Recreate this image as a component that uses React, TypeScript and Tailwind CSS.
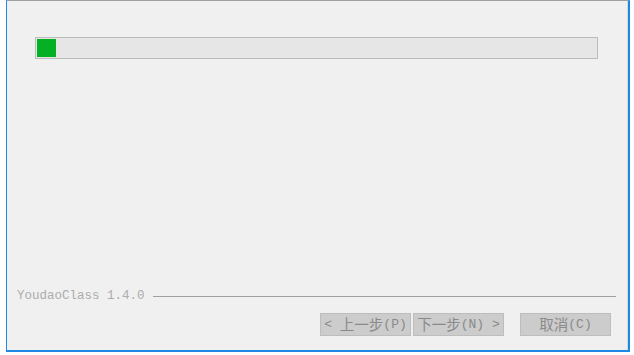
import React from "react";

const mono = { fontFamily: '"Liberation Mono", "Noto Sans CJK SC", monospace' };
const cjk = { fontFamily: '"Noto Sans CJK SC", sans-serif' };

function Btn({ children, w }: { children: React.ReactNode; w: string }) {
  return (
    <div
      className={`${w} h-[23px] flex items-center justify-center bg-[#cccccc] border border-[#bdbdbd] text-[#8a8a8a] text-[13px] leading-none whitespace-pre`}
      style={mono}
    >
      {children}
    </div>
  );
}

function C({ children }: { children: React.ReactNode }) {
  return (
    <span className="text-[14.5px] leading-none" style={cjk}>
      {children}
    </span>
  );
}

export default function App() {
  return (
    <div className="w-[634px] h-[355px] bg-white overflow-hidden">
      <div className="ml-[6px] w-[624px] h-[352px] bg-[#f0f0f0] border-t border-t-[#a0a0a0] border-l border-l-[#1e88e5] border-r-2 border-r-[#1e88e5] border-b-2 border-b-[#1e88e5]">
        <div className="h-full flex flex-col border-r border-r-[#d9d9d9]">
          <div className="pl-[28px] pt-[36px]">
            <div className="w-[563px] h-[22px] border border-[#bcbcbc] bg-[#e6e6e6] p-px">
              <div className="w-[19px] h-full bg-[#06b025]" />
            </div>
          </div>
          <div className="flex-1" />
          <div className="flex items-center pl-[10px] pr-[11px] h-[14px]">
            <span className="text-[12.5px] leading-none text-[#acacac] whitespace-nowrap" style={mono}>
              YoudaoClass 1.4.0
            </span>
            <div className="flex-1 ml-[8px] h-px bg-[#a0a0a0] mt-[1px]" />
          </div>
          <div className="flex justify-end items-center pr-[16px] pt-[10px] pb-[14px]">
            <Btn w="w-[91px]">
              {"< "}
              <C>上一步</C>
              (P)
            </Btn>
            <div className="w-[2px]" />
            <Btn w="w-[91px]">
              <C>下一步</C>
              {"(N) >"}
            </Btn>
            <div className="w-[16px]" />
            <Btn w="w-[91px]">
              <C>取消</C>
              (C)
            </Btn>
          </div>
        </div>
      </div>
    </div>
  );
}
